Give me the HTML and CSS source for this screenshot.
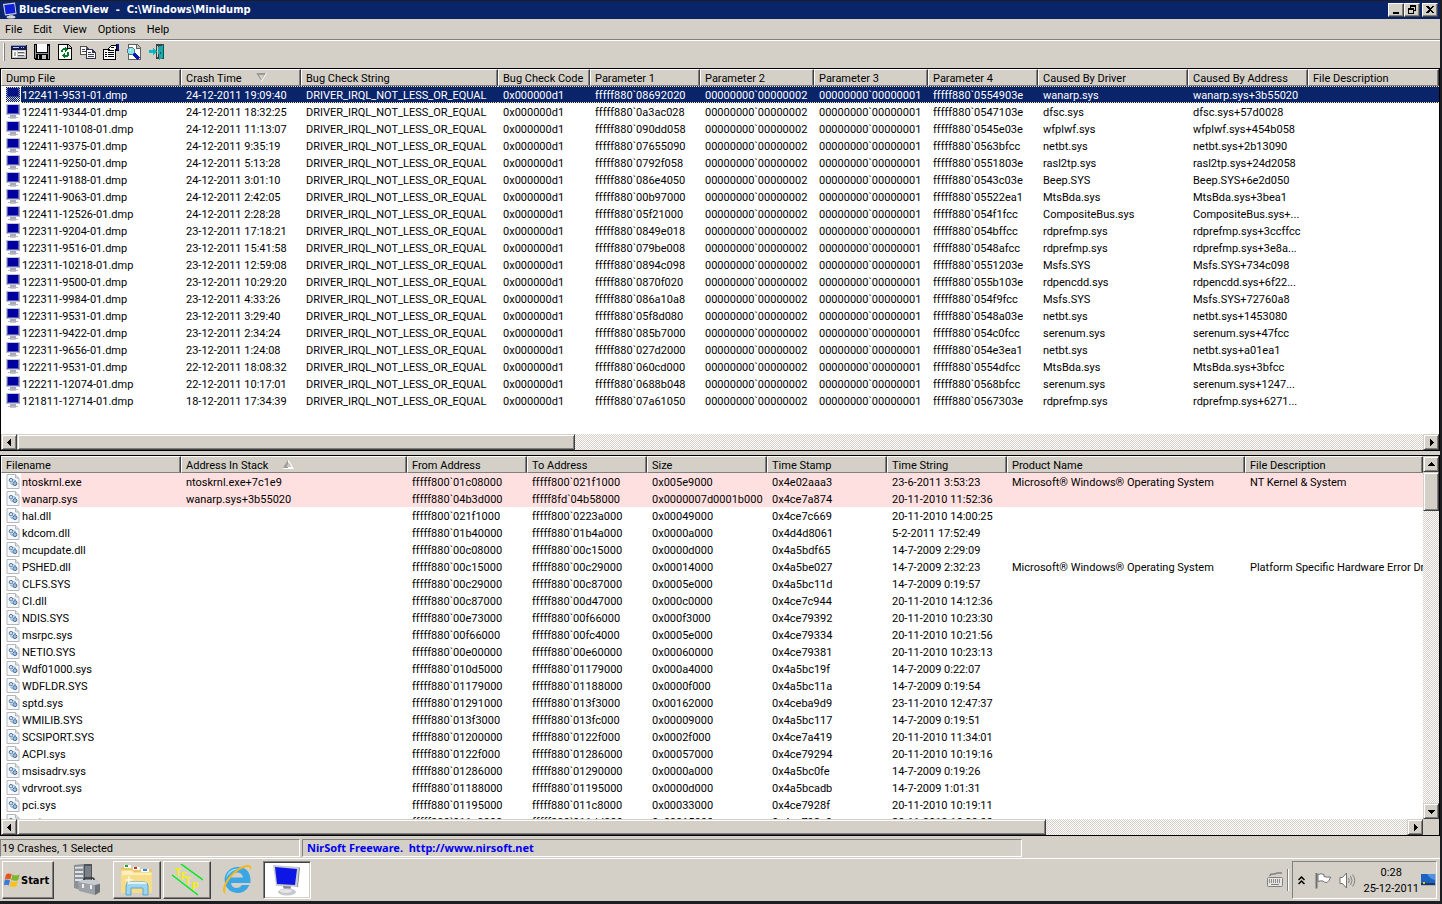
FILE: index.html
```html
<!DOCTYPE html>
<html lang="en">
<head>
  <meta charset="UTF-8">
  <meta name="viewport" content="width=device-width, initial-scale=1.0">
  <title>BlueScreenView</title>
  <link rel="stylesheet" href="styles.css">
</head>
<body>

  <!-- Shared icons -->
  <svg class="defs" aria-hidden="true">
    <defs>
      <pattern id="dither" width="2" height="2" patternUnits="userSpaceOnUse">
        <rect width="1" height="1" fill="#0a246a"/>
        <rect x="1" y="1" width="1" height="1" fill="#0a246a"/>
      </pattern>
      <symbol id="monitor" viewBox="0 0 14 15">
        <rect width="14" height="11" fill="#c3c5d6"/>
        <rect x="13" y="1" width="1" height="10" fill="#9fa1b4"/>
        <rect x="1" y="1" width="12" height="9" fill="#5a5cb8"/>
        <rect x="2" y="1" width="10" height="8" fill="#0000a0"/>
        <rect x="4" y="11" width="6" height="2" fill="#a9abb8"/>
        <rect x="2" y="13" width="10" height="1" fill="#b4b6c2"/>
        <rect x="4" y="14" width="6" height="1" fill="#c9cad2"/>
      </symbol>
      <symbol id="sysfile" viewBox="0 0 13 15">
        <path d="M.5.5h8.500l3.500 3.500v10.500h-12z" fill="#f7f8f9" stroke="#b4b8bd"/>
        <path d="M9 .5v3.500h3.500" fill="#dfe2e6" stroke="#b4b8bd"/>
        <circle cx="4.500" cy="6.200" r="1.800" fill="#cfe0f0" stroke="#4f7aa8"/>
        <circle cx="8.400" cy="9.600" r="2" fill="#9fc0e0" stroke="#3f6c9c"/>
        <path d="M7 5.500l2.500 1.500M4 9l2 2" stroke="#6f93b8"/>
      </symbol>
    </defs>
  </svg>

  <div class="window">
    <header class="titlebar">
      <svg class="app-icon" viewBox="0 0 16 17">
        <path d="M1 2l12-1.500 1.500 11.500-11.500 1.500z" fill="#d8dae4"/>
        <path d="M2.300 3l10-1.300 1.200 9.300-9.800 1.200z" fill="#0f1fd8"/>
        <path d="M7 13l4-.5.5 2h-4z" fill="#a8aab8"/>
        <ellipse cx="9" cy="15.200" rx="4.500" ry="1.400" fill="#d2d4dc"/>
      </svg>
      <h1>BlueScreenView  -  C:\Windows\Minidump</h1>
      <button class="win-btn" aria-label="Minimize"><svg viewBox="0 0 10 10"><path d="M2 7h6v2h-6z"/></svg></button>
      <button class="win-btn" aria-label="Restore"><svg viewBox="0 0 10 10"><path d="M3 0h6v6h-2v-1h1v-3h-4v1h-1zM1 3h6v6h-6zM2 5v3h4v-3z" fill-rule="evenodd"/></svg></button>
      <button class="win-btn close" aria-label="Close"><svg viewBox="0 0 10 10"><path d="M1 1h2l2 2 2-2h2l-3 3.500 3 3.500h-2l-2-2-2 2h-2l3-3.500z"/></svg></button>
    </header>

    <nav class="menubar">
      <button>File</button>
      <button>Edit</button>
      <button>View</button>
      <button>Options</button>
      <button>Help</button>
    </nav>

    <div class="toolbar">
      <button aria-label="Advanced Options"><svg viewBox="0 0 16 16">
        <path fill="#202020" d="M0 1h16v14h-16z"/><path fill="#c4c6cc" d="M1 6h14v8h-14z"/><path fill="#8c94ac" d="M0 1h15v1h-15z"/>
        <path fill="#0a1a78" d="M1 2h14v3h-14z"/><path fill="#c8c8d0" d="M2 3h6v1h-6zM10 3h1v1h-1zM12 3h1v1h-1z"/>
        <path fill="#fff" d="M2 7h4v6h-4zM7 7h7v1h-7zM7 10h7v1h-7z"/><path fill="#606060" d="M7 8h6v1h-6zM7 11h6v1h-6z"/><path fill="#b0b0b0" d="M3 8h2v4h-2z"/>
      </svg></button>
      <button aria-label="Save Selected Items"><svg viewBox="0 0 16 16">
        <path fill="#000" d="M0 0h16v16h-15l-1-1z"/><path fill="#909090" d="M1 1h1v13h-1zM14 2h1v13h-1z"/>
        <path fill="#fff" d="M3 0h10v8h-10z"/><path fill="#909090" d="M2 9h12v1h-12z"/>
        <path fill="#c0c0c0" d="M4 11h8v4h-8z"/><path fill="#000" d="M5 11h3v4h-3z"/>
      </svg></button>
      <button aria-label="Refresh"><svg viewBox="0 0 16 16">
        <path fill="#000" d="M1 0h10l4 4v12h-14z"/><path fill="#fff" d="M2 1h8v4h4v10h-12z"/><path fill="#c0c0c0" d="M11 1l3 3h-3z"/>
        <path fill="#007a28" d="M4 8v-2l2-2h2v-1l3 2.500-3 2.500v-2h-2v2zM12 8v3l-2 2h-2v1l-3-2.500 3-2.500v2h2v-3z"/>
      </svg></button>
      <button aria-label="Copy"><svg viewBox="0 0 16 16">
        <path fill="#505050" d="M0 2h6l3 3v6h-9z"/><path fill="#fff" d="M1 3h5v3h2v4h-7z"/><path fill="#404040" d="M2 5h3v1h-3zM2 7h4v1h-4z"/>
        <path fill="#303058" d="M6 5h6l4 4v6h-10z"/><path fill="#fff" d="M7 6h5v3h3v5h-8z"/><path fill="#404040" d="M8 8h3v1h-3zM8 10h6v1h-6zM8 12h6v1h-6z"/>
      </svg></button>
      <button aria-label="Properties"><svg viewBox="0 0 16 16">
        <path fill="#000" d="M0 5h5v-1l3-3h5v-1h3v7h-3v9h-13z"/><path fill="#fff" d="M1 6h4v1h4l3-1v9h-11z"/>
        <path fill="#fff" d="M6 4l2-2h5v3l-2 1h-4z"/><path fill="#0a1a9c" d="M14 0h2v6h-2z"/>
        <path fill="#000" d="M2 8h2v1h-2zM5 8h6v1h-6zM2 10h2v1h-2zM5 10h6v1h-6zM2 12h2v1h-2zM5 12h6v1h-6zM8 3h3v1h-3z"/>
      </svg></button>
      <button aria-label="Find"><svg viewBox="0 0 16 16">
        <path fill="#606060" d="M2 0h9l4 4v12h-13z"/><path fill="#fff" d="M3 1h7v4h4v10h-11z"/><path fill="#c0c0c0" d="M11 1l3 3h-3z"/>
        <circle cx="5" cy="7" r="3.500" fill="#7fe8f0" stroke="#607080"/><path d="M8 10l5 5" stroke="#0a1ab8" stroke-width="3"/><path fill="#fff" d="M4 5h1v2h-1z"/>
      </svg></button>
      <button aria-label="Exit"><svg viewBox="0 0 16 16">
        <path fill="#404040" d="M7 0h8v15h-8z"/><path fill="#d4d0c8" d="M8 2h1v11h-1z"/>
        <path fill="#20a8a8" d="M9 3l5-2v13l-4 2z"/><path fill="#005858" d="M14 1h1v14h-1zM11 8h1v2h-1z"/>
        <path fill="#00b8c0" d="M0 6h4v-3l4 4.500-4 4.500v-3h-4z"/>
      </svg></button>
    </div>

    <!-- Crashes -->
    <section class="pane pane-top">
      <div class="view">
        <table>
          <colgroup>
            <col class="w180"><col class="w120"><col class="w197"><col class="w92"><col class="w110"><col class="w114">
            <col class="w114"><col class="w110"><col class="w150"><col class="w120"><col>
          </colgroup>
          <thead>
            <tr>
              <th>Dump File</th>
              <th>Crash Time <svg class="sort" viewBox="0 0 11 9"><path d="M0 0h11l-5.500 9z" fill="#fff"/><path d="M0 0h10l-5 8z" fill="#9c9a94"/><path d="M3 2h5l-2.500 5z" fill="#d4d0c8"/></svg></th>
              <th>Bug Check String</th>
              <th>Bug Check Code</th>
              <th>Parameter 1</th>
              <th>Parameter 2</th>
              <th>Parameter 3</th>
              <th>Parameter 4</th>
              <th>Caused By Driver</th>
              <th>Caused By Address</th>
              <th>File Description</th>
            </tr>
          </thead>
          <tbody id="crashes"></tbody>
        </table>
      </div>
      <div class="hscroll">
        <button aria-label="Scroll left"><svg viewBox="0 0 7 7"><path d="M5 0v7l-4-3.500z"/></svg></button>
        <div class="track"><div class="thumb thumb-top"></div></div>
        <button aria-label="Scroll right"><svg viewBox="0 0 7 7"><path d="M2 0v7l4-3.500z"/></svg></button>
      </div>
    </section>

    <div class="splitter"></div>

    <!-- Drivers found in the stack -->
    <section class="pane pane-bottom">
      <div class="view-row">
        <div class="view">
          <table>
            <colgroup>
              <col class="w180"><col class="w226"><col class="w120"><col class="w120"><col class="w120">
              <col class="w120"><col class="w120"><col class="w238"><col>
            </colgroup>
            <thead>
              <tr>
                <th>Filename</th>
                <th>Address In Stack <svg class="sort" viewBox="0 0 11 9"><path d="M5.500 0l5.500 9h-11z" fill="#fff"/><path d="M5 0v8h-5z" fill="#9c9a94"/><path d="M5.500 2l3 5h-5z" fill="#c8c5be"/></svg></th>
                <th>From Address</th>
                <th>To Address</th>
                <th>Size</th>
                <th>Time Stamp</th>
                <th>Time String</th>
                <th>Product Name</th>
                <th>File Description</th>
              </tr>
            </thead>
            <tbody id="drivers"></tbody>
          </table>
        </div>
        <div class="vscroll">
          <button aria-label="Scroll up"><svg viewBox="0 0 7 7"><path d="M0 5h7l-3.500-4z"/></svg></button>
          <div class="track"><div class="thumb"></div></div>
          <button aria-label="Scroll down"><svg viewBox="0 0 7 7"><path d="M0 2h7l-3.500 4z"/></svg></button>
        </div>
      </div>
      <div class="hscroll">
        <button aria-label="Scroll left"><svg viewBox="0 0 7 7"><path d="M5 0v7l-4-3.500z"/></svg></button>
        <div class="track"><div class="thumb thumb-bottom"></div></div>
        <button aria-label="Scroll right"><svg viewBox="0 0 7 7"><path d="M2 0v7l4-3.500z"/></svg></button>
        <div class="corner"></div>
      </div>
    </section>

    <footer class="statusbar">
      <div class="status-count">19 Crashes, 1 Selected</div>
      <div class="status-link"><a href="http://www.nirsoft.net">NirSoft Freeware.  http://www.nirsoft.net</a></div>
    </footer>
  </div>

  <div class="taskbar">
    <button class="start">
      <svg viewBox="0 0 16 16">
        <path d="M2 2.500c2-1.500 3.500-1.300 5.700-.3l-1.400 5.400c-1.700-1-3.200-1.200-5.600.2z" fill="#e8531c"/>
        <path d="M8.500 2.600c2 1.100 4 1.400 7.200 0l-1.500 5.400c-2.300 1.300-4.800 1-7-.2z" fill="#7cb82a"/>
        <path d="M.5 8.600c2-1.400 3.500-1.200 5.500-.2l-1.300 5.200c-1.600-1-3-1-4.700-.1z" fill="#3a7ad8"/>
        <path d="M6.900 9c2 1 4 1.400 7 .1l-1.300 5.200c-2.300 1.200-4.800.9-7-.2z" fill="#fbc01e"/>
      </svg>Start</button>

    <button class="task plain" aria-label="Server Manager"><svg viewBox="0 0 32 32">
      <path d="M3 1l10-1v27l-10-3z" fill="#8c9198"/><path d="M13 0h8v28h-8z" fill="#4f545c"/>
      <path d="M4 3l8-.5v2l-8 .3zM4 7h8v2h-8zM4 11h8v2h-8zM4 15h8v2h-8z" fill="#dfe3e7"/>
      <path d="M14 2h6v14h-6z" fill="#7a8088"/>
      <path d="M13 18v-2.500q0-1.500 2-1.500h6q2 0 2 1.500v2.500" fill="none" stroke="#333" stroke-width="1.500"/>
      <path d="M7 18l5-2h13l4 4v8l-5 3-16-4z" fill="#9da2a8"/><path d="M7 18l5-2h13l4 4-5 1z" fill="#c8ccd0"/>
      <path d="M24 21l5-1v8l-5 3z" fill="#6d7278"/><path d="M11 20h2v4h-2zM19 21h2v4h-2z" fill="#eee"/>
    </svg></button>

    <button class="task" aria-label="Windows Explorer"><svg viewBox="0 0 32 32">
      <path d="M0 4q0-1 1-1h9l1 2h20v22h-31z" fill="#e8c86a"/>
      <path d="M3 1h7v3h-7zM12 3h7v3h-7zM20 5h8v3h-8z" fill="#fff"/>
      <path d="M4 1h3v2h-3z" fill="#1fa038"/><path d="M13 3h3v2h-3z" fill="#d83020"/><path d="M22 5h4v2h-4z" fill="#2a8ad8"/>
      <path d="M0 6h11l2 2h18v20q0 1-1 1h-29q-1 0-1-1z" fill="#f8dd88"/><path d="M1 7h10l2 2h17v2h-29z" fill="#fdf0be"/>
      <path d="M5 31v-9q0-4 4-4h14q4 0 4 4v9h-5v-7h-12v7z" fill="#9fd4ee" stroke="#5aa6cf"/>
      <path d="M6 20q1-2 3-2h14q3 0 3 2z" fill="#dff3fb"/><path d="M8 12v8M4 16h8" stroke="#fff"/>
    </svg></button>

    <button class="task" aria-label="TFTP"><svg viewBox="0 0 32 32">
      <path d="M10 0l22 16M1 11l26 20" stroke="#00e818" stroke-width="1.500"/>
      <text class="tftp" x="4 10 14 21" y="12 16 21 26">TFTP</text>
    </svg></button>

    <button class="task plain" aria-label="Internet Explorer"><svg viewBox="0 0 32 32">
      <path d="M16 3a13 13 0 1 0 12.500 18h-7.500q-2 3-5 3-5.500 0-6-5h19.500q1-16-13.500-16zm-6 10.500q1-5 6-5t6 5z" fill="#3aa7e4"/>
      <path d="M16 4.500a11 11 0 0 0-11 10q5-9 14-9.800z" fill="#9bdcf8"/>
      <path d="M5 30q-5-1-2-9 4-9 12-15 8-5.500 13-5 3 .6 2 6-.5-4-3-4-5 0-12 5.500-7 6-10 13-2 6 0 8.500z" fill="#f5b81c"/>
    </svg></button>

    <button class="task active" aria-label="BlueScreenView"><svg viewBox="0 0 32 32">
      <path d="M2 1l26 2-2 20-21-1z" fill="#c9cbd2"/><path d="M28 3l1 1-2 19-1 0z" fill="#8b8d96"/>
      <path d="M4 3l22 2-2 16-18-1z" fill="#0e16e6"/>
      <path d="M12 22l8 .5v4h-7z" fill="#b4b6be"/><path d="M12 22l8 .5-1 2h-6z" fill="#85878f"/>
      <ellipse cx="16" cy="28" rx="9" ry="3.500" fill="#c6c8ce"/><ellipse cx="15" cy="27" rx="6" ry="1.800" fill="#e6e7ea"/>
    </svg></button>

    <button class="keyboard" aria-label="Language bar"><svg viewBox="0 0 16 16">
      <path d="M3 4q0-2 3-2t4-1h5" fill="none" stroke="#808080" stroke-width="1.500"/>
      <rect x=".5" y="5.500" width="15" height="9" rx="1" fill="#e6e4e0" stroke="#808080"/>
      <path d="M2 8h12M2 10h12" stroke="#707070" stroke-width="1.500" stroke-dasharray="1 1"/><path d="M4 12.500h8" stroke="#808080"/>
    </svg></button>
    <div class="divider"></div>

    <div class="tray">
      <button aria-label="Show hidden icons"><svg class="chevrons" viewBox="0 0 7 9"><path d="M.5 4l3-3 3 3M.5 8l3-3 3 3" fill="none" stroke="#000" stroke-width="1.500"/></svg></button>
      <button aria-label="Action Center"><svg viewBox="0 0 17 17">
        <path d="M1.500 1v15.500" stroke="#707070" stroke-width="2"/>
        <path d="M3 2.500q3-1.500 6 0v2q3 1 6.500.5-1 4-3.500 5.500-3 0-4-1.500-2.500-.5-5 .5z" fill="#fff" stroke="#707070"/>
      </svg></button>
      <button aria-label="Volume"><svg viewBox="0 0 17 17">
        <path d="M1 5.500h2.500l4-4.500v15l-4-4.500h-2.500z" fill="#fff" stroke="#707070"/>
        <path d="M9.500 6q1.500 2.500 0 5M11.500 4q3 4.500 0 9M13.500 2.500q4.500 6 0 12" fill="none" stroke="#808080"/>
      </svg></button>
      <div class="clock"><span>0:28</span><span>25-12-2011</span></div>
      <button aria-label="Show desktop"><svg class="desk" viewBox="0 0 15 12">
        <path d="M0 0h15v12h-15z" fill="#9db4cc"/><path d="M0 0h14v9h-14z" fill="#1c62c0"/><path d="M6 0h8v6q-5-1-8-6z" fill="#4f94e0"/>
        <path d="M0 9h14v2h-14z" fill="#26364c"/><path d="M2 8h2v2h-2z" fill="#f0c030"/>
      </svg></button>
    </div>
  </div>

  <script src="script.js"></script>
</body>
</html>
```

FILE: styles.css
```css
html, body {
  height: 100%;
}

body {
  margin: 0;
  padding: 1px 2px 3px 0;
  box-sizing: border-box;
  display: flex;
  flex-direction: column;
  overflow: hidden;
  background: #1c1e22;
  color: #000;
  font: 11px/17px Roboto, "Liberation Sans", sans-serif;
}

button {
  margin: 0;
  padding: 0;
  border: 0;
  background: none;
  color: inherit;
  font: inherit;
}

svg {
  display: block;
}

.defs {
  position: absolute;
  width: 0;
  height: 0;
}

.window {
  flex: 1;
  min-height: 0;
  display: flex;
  flex-direction: column;
  background: #d4d0c8;
}

/* Title bar */
.titlebar {
  display: flex;
  align-items: center;
  height: 18px;
  padding: 0 2px;
  background: #0a246a;
  color: #fff;
}

.app-icon {
  width: 16px;
  height: 17px;
  margin-right: 1px;
}

.titlebar h1 {
  flex: 1;
  margin: 0;
  font: bold 11px/18px "DejaVu Sans Condensed", sans-serif;
  white-space: pre;
}

.win-btn,
.hscroll button,
.vscroll button,
.thumb {
  box-sizing: border-box;
  background: #d4d0c8;
  border: 1px solid;
  border-color: #d4d0c8 #404040 #404040 #d4d0c8;
  box-shadow: inset 1px 1px #fff, inset -1px -1px #808080;
}

.win-btn {
  width: 16px;
  height: 14px;
  border-color: #fff #404040 #404040 #fff;
  box-shadow: inset -1px -1px #808080;
}

.win-btn svg {
  width: 10px;
  height: 10px;
  margin: 0 auto;
  shape-rendering: crispEdges;
}

.close {
  margin-left: 2px;
}

/* Menu and toolbar */
.menubar {
  display: flex;
  gap: 11px;
  height: 20px;
  padding-left: 5px;
  border-bottom: 1px solid #808080;
}

.toolbar {
  display: flex;
  align-items: center;
  gap: 7px;
  height: 22px;
  padding-bottom: 5px;
  border-top: 1px solid #fff;
}

.toolbar::before {
  content: "";
  width: 1px;
  height: 18px;
  margin-left: 3px;
  border-right: 1px solid #808080;
  background: #fff;
  margin-right: -1px;
}

.toolbar svg {
  width: 16px;
  height: 16px;
  shape-rendering: crispEdges;
}

/* Lists */
.pane {
  display: flex;
  flex-direction: column;
  box-sizing: border-box;
  border: 1px solid #000;
  background: #fff;
}

.pane-top {
  flex: 0 0 383px;
}

.pane-bottom {
  flex: 1;
  min-height: 0;
}

.splitter {
  height: 4px;
}

.view {
  flex: 1;
  min-width: 0;
  min-height: 0;
  overflow: hidden;
}

.view-row {
  flex: 1;
  min-height: 0;
  display: flex;
}

table {
  width: 100%;
  table-layout: fixed;
  border-collapse: separate;
  border-spacing: 0;
}

.w92 { width: 92px; }
.w110 { width: 110px; }
.w114 { width: 114px; }
.w120 { width: 120px; }
.w150 { width: 150px; }
.w180 { width: 180px; }
.w197 { width: 197px; }
.w226 { width: 226px; }
.w238 { width: 238px; }

th, td {
  box-sizing: border-box;
  height: 17px;
  padding: 2px 0 0 5px;
  overflow: hidden;
  text-align: left;
  font-weight: normal;
  line-height: 15px;
  white-space: nowrap;
}

th {
  background: #d4d0c8;
  border: 1px solid;
  border-color: #fff #404040 #808080 #fff;
  box-shadow: inset -1px 0 #808080;
  padding-left: 4px;
  line-height: 13px;
}

.sort {
  display: inline-block;
  width: 11px;
  height: 9px;
  margin-left: 12px;
}

td:first-child {
  padding-left: 0;
}

.file-icon {
  float: left;
  width: 20px;
  height: 17px;
  margin: -2px 1px 0 0;
  background: #fff;
}

.file-icon svg {
  width: 14px;
  height: 15px;
  margin: 1px 0 0 5px;
}

.selected td {
  color: #fff;
  background:
    repeating-linear-gradient(90deg, #f5db95 0 1px, transparent 1px 2px) top / 100% 1px no-repeat,
    repeating-linear-gradient(90deg, #f5db95 0 1px, transparent 1px 2px) bottom / 100% 1px no-repeat,
    #0a246a;
}

.in-stack td {
  background: #ffe0e0;
}

/* Scroll bars */
.hscroll {
  display: flex;
  height: 16px;
}

.vscroll {
  display: flex;
  flex-direction: column;
  width: 16px;
}

.hscroll button,
.vscroll button,
.corner {
  flex: none;
  width: 16px;
  height: 16px;
}

.hscroll button svg,
.vscroll button svg {
  width: 7px;
  height: 7px;
  margin: 0 auto;
  shape-rendering: crispEdges;
}

.corner {
  background: #d4d0c8;
}

.track {
  flex: 1;
  background: repeating-conic-gradient(#fff 0 25%, #d4d0c8 0 50%) 0 0 / 2px 2px;
}

.hscroll .thumb {
  height: 16px;
}

.thumb-top {
  width: 39.7%;
}

.thumb-bottom {
  width: 74%;
}

.vscroll .thumb {
  height: 39px;
}

/* Status bar */
.statusbar {
  display: flex;
  gap: 2px;
  height: 22px;
  padding-top: 3px;
  box-sizing: border-box;
}

.status-count,
.status-link {
  box-sizing: border-box;
  height: 18px;
  padding-left: 1px;
  border: 1px solid;
  border-color: #808080 #fff #fff #808080;
  line-height: 17px;
}

.status-count {
  width: 300px;
}

.status-link {
  width: 50%;
  padding-left: 4px;
}

.status-link a {
  display: block;
  color: #0000f0;
  font: bold 11px/15px "Noto Sans", sans-serif;
  text-decoration: none;
  white-space: pre;
}

/* Taskbar */
.taskbar {
  display: flex;
  align-items: center;
  gap: 2px;
  height: 43px;
  padding: 0 3px 0 2px;
  box-sizing: border-box;
  border-top: 1px solid #fff;
  background: #d4d0c8;
}

.start,
.task {
  box-sizing: border-box;
  height: 38px;
  border: 1px solid;
  border-color: #fff #404040 #404040 #fff;
  box-shadow: inset -1px -1px #808080;
}

.start {
  display: flex;
  align-items: center;
  gap: 1px;
  width: 52px;
  margin-right: 7px;
  padding-left: 1px;
  font: bold 11px/17px "DejaVu Sans Condensed", sans-serif;
}

.start svg {
  width: 16px;
  height: 16px;
}

.task {
  width: 48px;
}

.task svg {
  width: 32px;
  height: 32px;
  margin: 0 auto;
}

.tftp {
  fill: #f4f000;
  font: bold 10px "Liberation Sans", sans-serif;
}

.plain {
  border-color: transparent;
  box-shadow: none;
}

.active {
  background: #fff;
  border-color: #808080 #fff #fff #808080;
  box-shadow: inset 1px 1px #404040, inset -1px -1px #d4d0c8;
}

.keyboard {
  margin-left: auto;
}

.keyboard svg {
  width: 16px;
  height: 16px;
}

.divider {
  width: 1px;
  height: 22px;
  margin: 0 1px 0 2px;
  border-left: 1px solid #808080;
  background: #fff;
}

.tray {
  display: flex;
  align-items: center;
  gap: 7px;
  height: 38px;
  box-sizing: border-box;
  padding: 0 0 0 5px;
  border: 1px solid;
  border-color: #808080 #fff #fff #808080;
}

.tray svg {
  width: 17px;
  height: 17px;
}

.tray .chevrons {
  width: 7px;
  height: 9px;
  margin-right: 3px;
}

.tray .desk {
  width: 15px;
  height: 12px;
  margin-left: -5px;
}

.clock {
  display: flex;
  flex-direction: column;
  align-items: center;
  padding-top: 1px;
  line-height: 16px;
}
```

FILE: script.js
```javascript
// dump file | crash time | parameter 1 | parameter 4 | driver | address
const crashes = `
122411-9531-01.dmp|24-12-2011 19:09:40|08692020|0554903e|wanarp.sys|wanarp.sys+3b55020
122411-9344-01.dmp|24-12-2011 18:32:25|0a3ac028|0547103e|dfsc.sys|dfsc.sys+57d0028
122411-10108-01.dmp|24-12-2011 11:13:07|090dd058|0545e03e|wfplwf.sys|wfplwf.sys+454b058
122411-9375-01.dmp|24-12-2011 9:35:19|07655090|0563bfcc|netbt.sys|netbt.sys+2b13090
122411-9250-01.dmp|24-12-2011 5:13:28|0792f058|0551803e|rasl2tp.sys|rasl2tp.sys+24d2058
122411-9188-01.dmp|24-12-2011 3:01:10|086e4050|0543c03e|Beep.SYS|Beep.SYS+6e2d050
122411-9063-01.dmp|24-12-2011 2:42:05|00b97000|05522ea1|MtsBda.sys|MtsBda.sys+3bea1
122411-12526-01.dmp|24-12-2011 2:28:28|05f21000|054f1fcc|CompositeBus.sys|CompositeBus.sys+...
122311-9204-01.dmp|23-12-2011 17:18:21|0849e018|054bffcc|rdprefmp.sys|rdprefmp.sys+3ccffcc
122311-9516-01.dmp|23-12-2011 15:41:58|079be008|0548afcc|rdprefmp.sys|rdprefmp.sys+3e8a...
122311-10218-01.dmp|23-12-2011 12:59:08|0894c098|0551203e|Msfs.SYS|Msfs.SYS+734c098
122311-9500-01.dmp|23-12-2011 10:29:20|0870f020|055b103e|rdpencdd.sys|rdpencdd.sys+6f22...
122311-9984-01.dmp|23-12-2011 4:33:26|086a10a8|054f9fcc|Msfs.SYS|Msfs.SYS+72760a8
122311-9531-01.dmp|23-12-2011 3:29:40|05f8d080|0548a03e|netbt.sys|netbt.sys+1453080
122311-9422-01.dmp|23-12-2011 2:34:24|085b7000|054c0fcc|serenum.sys|serenum.sys+47fcc
122311-9656-01.dmp|23-12-2011 1:24:08|027d2000|054e3ea1|netbt.sys|netbt.sys+a01ea1
122211-9531-01.dmp|22-12-2011 18:08:32|060cd000|0554dfcc|MtsBda.sys|MtsBda.sys+3bfcc
122211-12074-01.dmp|22-12-2011 10:17:01|0688b048|0568bfcc|serenum.sys|serenum.sys+1247...
121811-12714-01.dmp|18-12-2011 17:34:39|07a61050|0567303e|rdprefmp.sys|rdprefmp.sys+6271...`;

// filename | address in stack | from | to | size | time stamp | time string | product | description
const drivers = `
ntoskrnl.exe|ntoskrnl.exe+7c1e9|fffff800\`01c08000|fffff800\`021f1000|0x005e9000|0x4e02aaa3|23-6-2011 3:53:23|Microsoft® Windows® Operating System|NT Kernel & System
wanarp.sys|wanarp.sys+3b55020|fffff880\`04b3d000|fffff8fd\`04b58000|0x0000007d0001b000|0x4ce7a874|20-11-2010 11:52:36||
hal.dll||fffff800\`021f1000|fffff800\`0223a000|0x00049000|0x4ce7c669|20-11-2010 14:00:25||
kdcom.dll||fffff880\`01b40000|fffff880\`01b4a000|0x0000a000|0x4d4d8061|5-2-2011 17:52:49||
mcupdate.dll||fffff880\`00c08000|fffff880\`00c15000|0x0000d000|0x4a5bdf65|14-7-2009 2:29:09||
PSHED.dll||fffff880\`00c15000|fffff880\`00c29000|0x00014000|0x4a5be027|14-7-2009 2:32:23|Microsoft® Windows® Operating System|Platform Specific Hardware Error Driver
CLFS.SYS||fffff880\`00c29000|fffff880\`00c87000|0x0005e000|0x4a5bc11d|14-7-2009 0:19:57||
CI.dll||fffff880\`00c87000|fffff880\`00d47000|0x000c0000|0x4ce7c944|20-11-2010 14:12:36||
NDIS.SYS||fffff880\`00e73000|fffff880\`00f66000|0x000f3000|0x4ce79392|20-11-2010 10:23:30||
msrpc.sys||fffff880\`00f66000|fffff880\`00fc4000|0x0005e000|0x4ce79334|20-11-2010 10:21:56||
NETIO.SYS||fffff880\`00e00000|fffff880\`00e60000|0x00060000|0x4ce79381|20-11-2010 10:23:13||
Wdf01000.sys||fffff880\`010d5000|fffff880\`01179000|0x000a4000|0x4a5bc19f|14-7-2009 0:22:07||
WDFLDR.SYS||fffff880\`01179000|fffff880\`01188000|0x0000f000|0x4a5bc11a|14-7-2009 0:19:54||
sptd.sys||fffff880\`01291000|fffff880\`013f3000|0x00162000|0x4ceba9d9|23-11-2010 12:47:37||
WMILIB.SYS||fffff880\`013f3000|fffff880\`013fc000|0x00009000|0x4a5bc117|14-7-2009 0:19:51||
SCSIPORT.SYS||fffff880\`01200000|fffff880\`0122f000|0x0002f000|0x4ce7a419|20-11-2010 11:34:01||
ACPI.sys||fffff880\`0122f000|fffff880\`01286000|0x00057000|0x4ce79294|20-11-2010 10:19:16||
msisadrv.sys||fffff880\`01286000|fffff880\`01290000|0x0000a000|0x4a5bc0fe|14-7-2009 0:19:26||
vdrvroot.sys||fffff880\`01188000|fffff880\`01195000|0x0000d000|0x4a5bcadb|14-7-2009 1:01:31||
pci.sys||fffff880\`01195000|fffff880\`011c8000|0x00033000|0x4ce7928f|20-11-2010 10:19:11||
partmgr.sys||fffff880\`011c8000|fffff880\`011dd000|0x00015000|0x4ce792c0|20-11-2010 10:20:00||`;

function icon(name) {
  return '<span class="file-icon"><svg><use href="#' + name + '"/></svg></span>';
}

function addRow(body, cells, iconName, cls) {
  const tr = body.insertRow();
  if (cls) tr.className = cls;
  for (const text of cells) {
    tr.insertCell().textContent = text;
  }
  tr.cells[0].insertAdjacentHTML('afterbegin', icon(iconName));
}

crashes.trim().split('\n').forEach((line, i) => {
  const [file, time, p1, p4, driver, address] = line.split('|');
  const cells = [file, time, 'DRIVER_IRQL_NOT_LESS_OR_EQUAL', '0x000000d1', 'fffff880`' + p1,
    '00000000`00000002', '00000000`00000001', 'fffff880`' + p4, driver, address, ''];
  addRow(document.getElementById('crashes'), cells, 'monitor', i === 0 ? 'selected' : '');
});

// the focused item's icon is drawn dithered
document.querySelector('.selected .file-icon svg')
  .insertAdjacentHTML('beforeend', '<rect width="14" height="15" fill="url(#dither)"/>');

// modules that have an address in the stack are highlighted
drivers.trim().split('\n').forEach(line => {
  const cells = line.split('|');
  addRow(document.getElementById('drivers'), cells, 'sysfile', cells[1] ? 'in-stack' : '');
});
```
